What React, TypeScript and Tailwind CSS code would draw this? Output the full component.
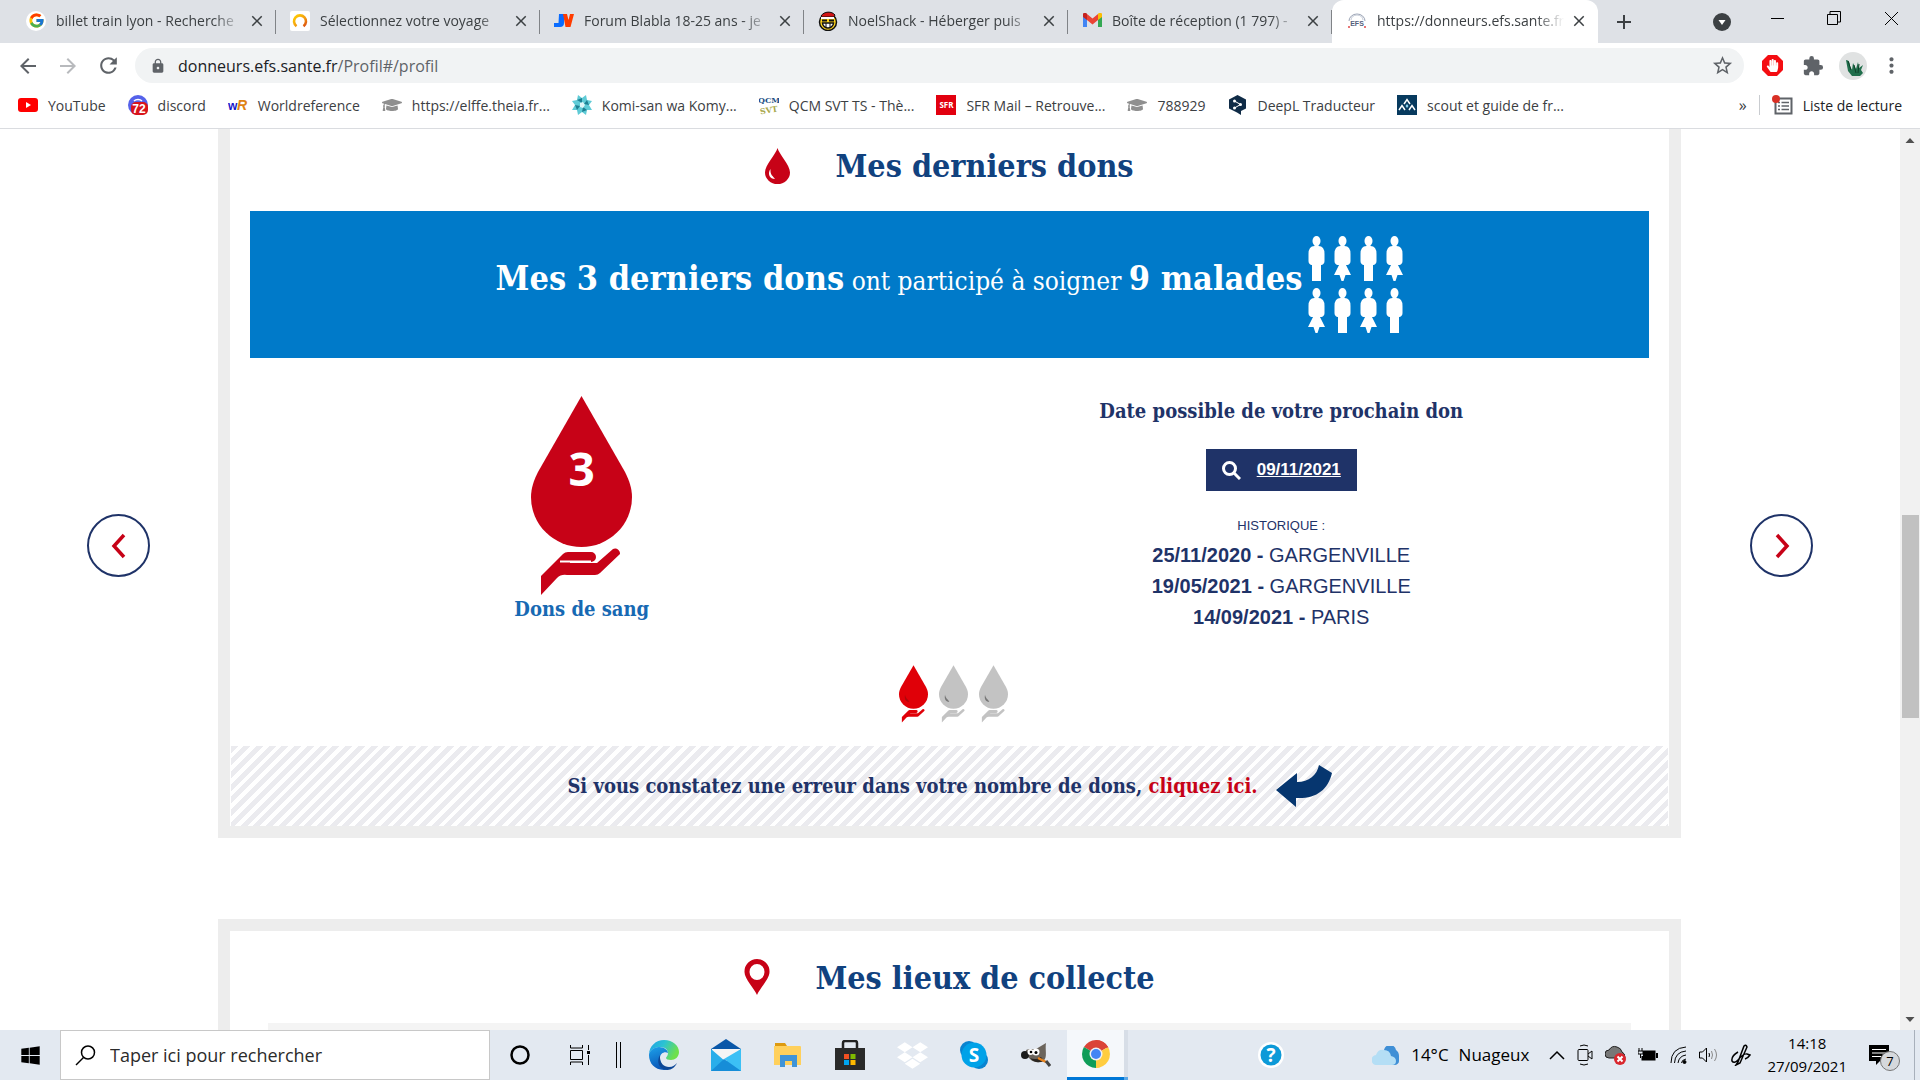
import { FC, ReactNode } from "react";
import { FcGoogle } from "react-icons/fc";
import { FaDropbox, FaGraduationCap, FaHandPaper, FaWindows } from "react-icons/fa";
import { MdArrowBack, MdArrowForward, MdClose, MdExtension, MdLock, MdMoreVert, MdRefresh, MdStarBorder } from "react-icons/md";

interface ITab {
    title: string
    icon: ReactNode
    active?: boolean
}

interface IBookmark {
    label: string
    icon: ReactNode
}

/* ---------- favicons ---------- */

const GoogleIcon: FC = () => (
    <span className="w-5 h-5 rounded-full bg-white flex items-center justify-center"><FcGoogle size={17} /></span>
);

const TravelIcon: FC = () => (
    <span className="w-5 h-5 bg-white rounded-xs flex items-center justify-center">
        <svg width="16" height="16" viewBox="0 0 16 16" fill="none">
            <defs>
                <linearGradient id="travel" x1="0" y1="0" x2="1" y2="1">
                    <stop offset="0" stopColor="#ffd000" />
                    <stop offset="0.6" stopColor="#f39a12" />
                    <stop offset="1" stopColor="#d9480f" />
                </linearGradient>
            </defs>
            <path d="M4.5 13.2A6 6 0 1 1 11.5 13.2" stroke="url(#travel)" strokeWidth="2.6" />
        </svg>
    </span>
);

const JvIcon: FC = () => (
    <svg width="20" height="20" viewBox="0 0 20 20">
        <path d="M5 3h5v9a4 4 0 0 1-4 4H0v-4h4.500z" fill="#0a6cff" />
        <path d="M9 3h4l1.500 6L16 3h4l-3.500 13h-5z" fill="#ff3c00" />
    </svg>
);

const NoelIcon: FC = () => (
    <svg width="20" height="20" viewBox="0 0 20 20">
        <circle cx="10" cy="11" r="8.500" fill="#ffd51c" stroke="#111" strokeWidth="1.500" />
        <path d="M3 5c3-5 11-5 14-1l-1 2H4z" fill="#d11515" stroke="#111" />
        <path d="M3 6h13v2H3z" fill="#fff" />
        <path d="M4 8.500h5v2H4zM11 8.500h5v2h-5z" fill="#111" />
        <path d="M4.500 12h11c0 3-3 5-5.500 5s-5.500-2-5.500-5z" fill="#fff" stroke="#111" strokeWidth="1.500" />
        <path d="M8 12v4M12 12v4" stroke="#111" />
    </svg>
);

const GmailIcon: FC = () => (
    <svg width="19" height="15" viewBox="0 0 19 15">
        <path d="M0 3v11h4V6z" fill="#4285f4" />
        <path d="M19 3v11h-4V6z" fill="#34a853" />
        <path d="M4 1l5.500 4.500L15 1v6l-5.500 4.500L4 7z" fill="#ea4335" />
        <path d="M0 3a2 2 0 0 1 4-2v6L0 4z" fill="#c5221f" />
        <path d="M19 3a2 2 0 0 0-4-2v6l4-3z" fill="#fbbc04" />
    </svg>
);

const EfsIcon: FC = () => (
    <svg width="20" height="20" viewBox="0 0 20 20">
        <path d="M2 10a8 7 0 0 1 16 0" fill="none" stroke="#9aa3b5" />
        <path d="M4 9a6 5 0 0 1 12 0" fill="none" stroke="#c4cad6" />
        <text x="10" y="15" textAnchor="middle" fontFamily="Liberation Sans" fontSize="7" fontWeight="700" fill="#55617c">EFS</text>
        <circle cx="2" cy="16" r="1" fill="#e04848" />
        <circle cx="18" cy="16" r="1" fill="#e04848" />
    </svg>
);

const YoutubeIcon: FC = () => (
    <svg width="20" height="14" viewBox="0 0 20 14">
        <rect width="20" height="14" rx="3" fill="#f00" />
        <path d="M8 4l5 3-5 3z" fill="#fff" />
    </svg>
);

const DiscordIcon: FC = () => (
    <svg width="20" height="20" viewBox="0 0 20 20">
        <circle cx="10" cy="10" r="10" fill="#5562ea" />
        <path d="M6 6c2-2 6-2 8 0" stroke="#fff" strokeWidth="1.500" fill="none" />
        <rect x="3" y="7" width="17" height="13" rx="5" fill="#d8141c" />
        <text x="11" y="18" textAnchor="middle" fontFamily="Liberation Sans" fontSize="12" fontWeight="700" fill="#fff">72</text>
    </svg>
);

const WordrefIcon: FC = () => (
    <svg width="20" height="20" viewBox="0 0 20 20">
        <text x="0" y="15" fontFamily="Liberation Sans" fontSize="12" fontWeight="700" fill="#1414c8">w</text>
        <text x="9" y="15" fontFamily="Liberation Sans" fontSize="14" fontStyle="italic" fontWeight="700" fill="#e08214">R</text>
    </svg>
);

const KomiIcon: FC = () => (
    <svg width="20" height="20" viewBox="0 0 20 20">
        <path d="M6 0l4 3 4-3 1 5 5 1-3 4 3 5-5 0-1 5-4-3-4 3-1-5-5 0 3-5-3-4 5-1z" fill="#5fcbd6" />
        <path d="M5 5l5-2 0 5zM15 5l2 5-5-1zM15 15l-5 2 1-5zM5 15l-2-5 5 1z" fill="#1d7f92" />
        <path d="M8 8l3-1 2 3-2 3-3-1z" fill="#dff6f8" />
    </svg>
);

const QcmIcon: FC = () => (
    <svg width="20" height="20" viewBox="0 0 20 20">
        <text x="10" y="8" textAnchor="middle" fontFamily="DejaVu Serif" fontSize="8" fontWeight="700" fill="#1d4f85">QCM</text>
        <text x="10" y="18" textAnchor="middle" fontFamily="DejaVu Serif" fontSize="8" fontWeight="700" fill="#a8a84a" transform="rotate(-10 10 16)">SVT</text>
    </svg>
);

const SfrIcon: FC = () => (
    <span className="w-5 h-5 bg-[#e2000f] text-white text-[8px] font-bold flex items-center justify-center">SFR</span>
);

const DeeplIcon: FC = () => (
    <svg width="17" height="20" viewBox="0 0 17 20">
        <path d="M8.500 0L17 4.500v9L12 16v4l-4-2.500L0 13.500v-9z" fill="#0f2b46" />
        <path d="M5.500 6l6 3.500-6 3.500" stroke="#fff" fill="none" />
        <circle cx="5.500" cy="6" r="1.500" fill="#fff" />
        <circle cx="11.500" cy="9.500" r="1.500" fill="#fff" />
        <circle cx="5.500" cy="13" r="1.500" fill="#fff" />
    </svg>
);

const ScoutIcon: FC = () => (
    <svg width="20" height="20" viewBox="0 0 20 20">
        <rect width="20" height="20" fill="#073a5e" />
        <path d="M7 9l3-4.500L13 9M2 15l3-4.500L8 15M12 15l3-4.500L18 15" stroke="#fff" strokeWidth="1.500" fill="none" />
        <path d="M10 9l1.500 2L10 13l-1.500-2z" fill="#8fd3ee" />
    </svg>
);

const tabs: ITab[] = [
    { title: "billet train lyon - Recherche", icon: <GoogleIcon /> },
    { title: "Sélectionnez votre voyage", icon: <TravelIcon /> },
    { title: "Forum Blabla 18-25 ans - je", icon: <JvIcon /> },
    { title: "NoelShack - Héberger puis", icon: <NoelIcon /> },
    { title: "Boîte de réception (1 797) -", icon: <GmailIcon /> },
    { title: "https://donneurs.efs.sante.fr", icon: <EfsIcon />, active: true },
]

const bookmarks: IBookmark[] = [
    { label: "YouTube", icon: <YoutubeIcon /> },
    { label: "discord", icon: <DiscordIcon /> },
    { label: "Worldreference", icon: <WordrefIcon /> },
    { label: "https://elffe.theia.fr...", icon: <FaGraduationCap size={20} color="#8f8f8f" /> },
    { label: "Komi-san wa Komy...", icon: <KomiIcon /> },
    { label: "QCM SVT TS - Thè...", icon: <QcmIcon /> },
    { label: "SFR Mail – Retrouve...", icon: <SfrIcon /> },
    { label: "788929", icon: <FaGraduationCap size={20} color="#8f8f8f" /> },
    { label: "DeepL Traducteur", icon: <DeeplIcon /> },
    { label: "scout et guide de fr...", icon: <ScoutIcon /> },
]

/* ---------- browser chrome ---------- */

const TabStrip: FC = () => (
    <div className="h-[43px] bg-[#dee1e6] flex items-stretch pl-3">
        {tabs.map((tab) => (
            <div key={tab.title} className={tab.active ? "w-[266px] flex items-center pl-[15px] pr-2.5 pb-0.5 bg-white rounded-t-xl" : "w-[264px] flex items-center pl-[14px] pr-2.5 pb-0.5 relative"}>
                <span className="w-5 flex justify-center shrink-0">{tab.icon}</span>
                <span className="ml-2.5 flex-1 overflow-hidden whitespace-nowrap text-[14px] text-[#3c4043] [mask-image:linear-gradient(to_right,#000_85%,transparent)]">{tab.title}</span>
                <button aria-label="Fermer l'onglet" className="ml-1.5 text-[#3c4043]"><MdClose size={18} /></button>
                {!tab.active && <span className="absolute right-0 top-2.5 h-6 w-px bg-[#808387]" />}
            </div>
        ))}
        <button aria-label="Nouvel onglet" className="ml-4 text-[#3c4043]">
            <svg width="20" height="20" viewBox="0 0 20 20"><path d="M10 3v14M3 10h14" stroke="currentColor" strokeWidth="2" /></svg>
        </button>
        <div className="ml-auto flex items-center">
            <button aria-label="Rechercher un onglet" className="mr-[18px]">
                <svg width="18" height="18" viewBox="0 0 18 18"><circle cx="9" cy="9" r="9" fill="#3c4043" /><path d="M5.500 7h7L9 12z" fill="#fff" /></svg>
            </button>
            <div className="flex items-start h-full">
                <button aria-label="Réduire" className="w-[56px] h-9 flex items-center justify-center">
                    <svg width="13" height="13" viewBox="0 0 13 13"><path d="M0 6.500h13" stroke="#000" /></svg>
                </button>
                <button aria-label="Restaurer" className="w-[58px] h-9 flex items-center justify-center">
                    <svg width="14" height="14" viewBox="0 0 14 14" fill="none" stroke="#000"><path d="M.5 3.500h10v10H.5zM3 3.500V.5h10.500V11h-3" /></svg>
                </button>
                <button aria-label="Fermer" className="w-[57px] h-9 flex items-center justify-center">
                    <svg width="13" height="13" viewBox="0 0 13 13" stroke="#000"><path d="M0 0l13 13M13 0L0 13" /></svg>
                </button>
            </div>
        </div>
    </div>
);

const Toolbar: FC = () => (
    <div className="h-[45px] flex items-center bg-white text-[#5f6368]">
        <button aria-label="Précédent" className="ml-4"><MdArrowBack size={24} /></button>
        <button aria-label="Suivant" className="ml-4 text-[#b8babd]"><MdArrowForward size={24} /></button>
        <button aria-label="Actualiser" className="ml-4"><MdRefresh size={25} /></button>
        <div className="ml-3.5 flex-1 h-[35px] rounded-full bg-[#f1f3f4] flex items-center pl-[15px] pr-2.5">
            <MdLock size={16} />
            <div className="ml-3 flex-1 text-[16px] whitespace-nowrap">
                <span className="text-[#202124]">donneurs.efs.sante.fr</span>/Profil#/profil
            </div>
            <button aria-label="Ajouter aux favoris"><MdStarBorder size={23} /></button>
        </div>
        <button aria-label="AdBlock" className="ml-[18px]">
            <svg width="21" height="21" viewBox="0 0 21 21"><path d="M6 0h9l6 6v9l-6 6H6l-6-6V6z" fill="#f40d12" /><FaHandPaper x="4" y="4" size={13} color="#fff" /></svg>
        </button>
        <button aria-label="Extensions" className="ml-[19px]"><MdExtension size={22} /></button>
        <button aria-label="Profil" className="ml-[15px]">
            <svg width="28" height="28" viewBox="0 0 28 28">
                <circle cx="14" cy="14" r="14" fill="#e0e2e2" />
                <path d="M7 8c3 0 4 3 4 6l2 4 1-7 3 6 2-7 1 6 4-3-2 5 2 3-3 3h-8l-4-5z" fill="#1f6e4b" />
                <path d="M9 9l3 9M15 13l2 8M20 12l-1 9" stroke="#0e4029" fill="none" />
            </svg>
        </button>
        <button aria-label="Menu" className="ml-3 mr-4"><MdMoreVert size={25} /></button>
    </div>
);

const Bookmarks: FC = () => (
    <nav className="h-[41px] flex items-center pl-[18px] pr-[18px] pb-1.5 bg-white text-[14px] text-[#3c4043] border-b border-[#dadce0] whitespace-nowrap">
        <div className="flex gap-[22px]">
            {bookmarks.map((item) => (
                <a key={item.label} href="#" className="flex items-center gap-2.5">
                    <span className="w-5 flex justify-center">{item.icon}</span>
                    {item.label}
                </a>
            ))}
        </div>
        <button aria-label="Autres favoris" className="ml-auto text-[16px]">»</button>
        <span className="ml-3 w-px h-5 bg-[#c9ccd0]" />
        <button className="ml-3 flex items-center gap-2.5 text-[#202124]">
            <svg width="21" height="21" viewBox="0 0 21 21">
                <path d="M3.500 3.500h16v15h-16z" fill="none" stroke="#5f6368" strokeWidth="2" />
                <path d="M6 7.500h2M6 11h2M6 14.500h2M9.500 7.500H17M9.500 11H17M9.500 14.500H17" stroke="#5f6368" strokeWidth="1.500" />
                <circle cx="4" cy="4" r="4" fill="#d93025" />
            </svg>
            Liste de lecture
        </button>
    </nav>
);

/* ---------- page ---------- */

const HandShape: FC = () => (
    <path d="M10 199V180L32 158Q34 156 37 156H60A5 5 0 0 1 60 166H39V167H66L82 153A5 5 0 0 1 89 158L69 177Q67 179 64 179H36Q30 178 26 182Z" />
);

const BigDrop: FC = () => (
    <svg width="101" height="200" viewBox="0 0 101 200" fill="#c70217">
        <path d="M50.500 0L94 76C98 84 101 92 101 101A50.500 50 0 0 1 0 101C0 92 3 84 7 76Z" />
        <HandShape />
        <path d="M29 165.500H60" stroke="#fff" strokeWidth="2" />
    </svg>
);

const SmallDrop: FC<{ on?: boolean }> = ({ on }) => (
    <svg width="29" height="58" viewBox="0 0 101 200" fill={on ? "#e00008" : "#c3c3c3"}>
        <path d="M50.500 0L94 76C98 84 101 92 101 101A50.500 50 0 0 1 0 101C0 92 3 84 7 76Z" />
        <path d="M21 103C17 120 26 128 36 128C32 118 24 118 21 103Z" fill={on ? "#b0050a" : "#777"} />
        <HandShape />
    </svg>
);

const TitleDrop: FC = () => (
    <svg width="25" height="36" viewBox="0 0 25 36">
        <path d="M12.500 0C14 6 25 17 25 24.500A12.500 11.500 0 0 1 0 24.500C0 17 11 6 12.500 0Z" fill="#c70217" />
        <path d="M5.500 21C2 26 5 31 10 31C8 28 5 27 5.500 21Z" fill="#fff" />
    </svg>
);

const TitlePin: FC = () => (
    <svg width="26" height="36" viewBox="0 0 26 36">
        <path d="M13 0A12.500 12.500 0 0 0 .5 13C.5 20 10 29 13 36C16 29 25.500 20 25.500 13A12.500 12.500 0 0 0 13 0ZM13 5A7.500 8 0 1 1 13 21A7.500 8 0 0 1 13 5Z" fill="#c70217" fillRule="evenodd" />
    </svg>
);

const Person: FC<{ woman?: boolean }> = ({ woman }) => (
    <svg width="17" height="45" viewBox="0 0 17 45" fill="#fff">
        <ellipse cx="8.500" cy="5" rx="4" ry="5" />
        <path d="M6.500 8h4v2q6 0 6 8v7q0 3-3 4h-10q-3-1-3-4v-7q0-8 6-8z" />
        {woman ? <path d="M6 27h5l6 12h-5.500L9.500 45h-2L5.500 39H0z" /> : <path d="M4 27h9v18H4z" />}
    </svg>
);

const crowd = [false, true, false, true, true, false, true, false]

const history = [
    { date: "25/11/2020", place: "GARGENVILLE" },
    { date: "19/05/2021", place: "GARGENVILLE" },
    { date: "14/09/2021", place: "PARIS" },
]

const CarouselButton: FC<{ label: string, d: string }> = ({ label, d }) => (
    <button aria-label={label} className="mt-[385px] w-[63px] h-[63px] shrink-0 rounded-full border-2 border-[#1f3368] flex items-center justify-center">
        <svg width="18" height="26" viewBox="0 0 18 26" fill="none" stroke="#c70217" strokeWidth="3.500"><path d={d} /></svg>
    </button>
);

const slab = "font-['DejaVu_Serif_Condensed','DejaVu_Serif',serif]"

const LastDonations: FC = () => (
    <section className="flex-1 border-12 border-t-0 border-[#ededed]">
        <div className="px-5 pt-[18px]">
            <div className="h-[38px] flex items-center justify-center gap-[45px]">
                <TitleDrop />
                <h2 className={`${slab} text-[32px] font-bold text-[#11427f] leading-[38px]`}>Mes derniers dons</h2>
            </div>
            <div className={`${slab} mt-[26px] h-[147px] bg-[#007ac9] text-white flex items-center justify-center gap-1.5`}>
                <p className="pb-3 whitespace-nowrap text-[26px]">
                    <b className="text-[34px]">Mes 3 derniers dons</b> ont participé à soigner <b className="text-[34px]">9 malades</b>
                </p>
                <div className="grid grid-cols-4 gap-x-[9px] gap-y-[7px]">
                    {crowd.map((woman, i) => <Person key={i} woman={woman} />)}
                </div>
            </div>
            <div className="grid grid-cols-2 mt-[38px] text-[#1f3368]">
                <div className="flex justify-center pr-9">
                    <div className="flex flex-col items-center">
                        <div className="relative">
                            <BigDrop />
                            <span className="absolute inset-x-0 top-[42px] text-center text-[46px] leading-[60px] font-bold text-white font-['Noto_Sans',sans-serif]">3</span>
                        </div>
                        <p className={`${slab} text-[20px] leading-[26px] font-bold text-[#1769b3]`}>Dons de sang</p>
                    </div>
                </div>
                <div className="flex flex-col items-center pr-9 font-['Liberation_Sans',Arial,sans-serif]">
                    <p className={`${slab} text-[20px] leading-[30px] font-bold whitespace-nowrap`}>Date possible de votre prochain don</p>
                    <a href="#" className="mt-[23px] h-[42px] px-4 bg-[#1f3368] text-white flex items-center gap-4 text-[17px] font-bold">
                        <svg width="19" height="19" viewBox="0 0 19 19" fill="none" stroke="#fff" strokeWidth="3"><circle cx="7.500" cy="7.500" r="6" /><path d="M12 12l6 6" /></svg>
                        <span className="underline">09/11/2021</span>
                    </a>
                    <p className="mt-[25px] text-[13px] leading-5">HISTORIQUE :</p>
                    <ul className="mt-1 text-[20px] leading-[31px] text-center">
                        {history.map((h) => <li key={h.date}><b>{h.date} -</b> {h.place}</li>)}
                    </ul>
                </div>
            </div>
            <div className="mt-[32px] flex justify-center gap-[11px] pl-2">
                <SmallDrop on />
                <SmallDrop />
                <SmallDrop />
            </div>
        </div>
        <div className="mt-[23px] h-20 mx-px flex items-center justify-center gap-[18px] bg-[repeating-linear-gradient(135deg,#ebebef_0px,#ebebef_5px,#fff_5px,#fff_9px)]">
            <p className={`${slab} text-[20px] font-bold text-[#1f3368]`}>Si vous constatez une erreur dans votre nombre de dons, <a href="#" className="text-[#c70217]">cliquez ici.</a></p>
            <svg width="56" height="42" viewBox="0 0 56 42"><path d="M43 0L56 8C52 25 40 34 20 33V42L0 25L21 8V17C33 17 41 10 43 0Z" fill="#06366f" /></svg>
        </div>
    </section>
);

const CollectPlaces: FC = () => (
    <section className="mt-[81px] ml-[218px] mr-[219px] border-12 border-b-0 border-[#ededed] flex-1">
        <div className="pt-7 flex items-start justify-center gap-[45px]">
            <TitlePin />
            <h2 className={`${slab} text-[32px] font-bold text-[#11427f] leading-[38px]`}>Mes lieux de collecte</h2>
        </div>
        <div className="mt-[26px] mx-[38px] h-20 bg-[#f4f4f4]" />
    </section>
);

const ScrollBar: FC = () => (
    <div className="w-5 bg-[#f1f1f1] flex flex-col items-center">
        <svg width="20" height="20" viewBox="0 0 20 20"><path d="M5.500 14L10 9l4.500 5z" fill="#505050" /></svg>
        <div className="mt-[366px] w-[17px] h-[203px] bg-[#c1c1c1]" />
        <svg className="mt-auto" width="20" height="20" viewBox="0 0 20 20"><path d="M5.500 7L10 12l4.500-5z" fill="#505050" /></svg>
    </div>
);

/* ---------- taskbar ---------- */

const EdgeIcon: FC = () => (
    <svg width="30" height="30" viewBox="0 0 30 30">
        <defs>
            <linearGradient id="edge-a" x1="0" y1="0" x2="1" y2="0.400">
                <stop offset="0" stopColor="#1e9fe8" /><stop offset="0.500" stopColor="#2cc3d2" /><stop offset="1" stopColor="#6fe04b" />
            </linearGradient>
            <linearGradient id="edge-b" x1="0" y1="0" x2="0.300" y2="1">
                <stop offset="0" stopColor="#1da2ea" /><stop offset="1" stopColor="#0a57b8" />
            </linearGradient>
        </defs>
        <path d="M0 15C0 6 7 0 15 0c9 0 15 6 15 12 0 5-4 8-8 8-3 0-5-1-5-2 0-1 2-2 2-5 0-4-4-6-8-6C5 7 0 11 0 15z" fill="url(#edge-a)" />
        <path d="M0 15c0-4 5-8 10-8 5 0 9 3 9 6-3-2-8 0-8 5 0 6 5 10 9 11.500C8 32 0 25 0 15z" fill="url(#edge-b)" />
        <path d="M11 18c0 5 4 9 9 9 4 0 6-2 8-4-2 4-5 7-10 7C10 29 7 22 11 15z" fill="#0d4796" />
    </svg>
);

const MailIcon: FC = () => (
    <svg width="30" height="32" viewBox="0 0 30 32">
        <path d="M15 0l15 10v3H0v-3z" fill="#0a57a8" />
        <path d="M1 10h28v10H1z" fill="#f5f5f5" />
        <path d="M0 10l15 13 15-13v22H0z" fill="#29aeea" />
        <path d="M13 20l17 12V10z" fill="#3cc0f5" />
        <path d="M0 32l13-12 17 12z" fill="#168dd8" />
    </svg>
);

const FolderIcon: FC = () => (
    <svg width="28" height="24" viewBox="0 0 28 24">
        <path d="M1 0h10l2 3H1z" fill="#dd9a10" />
        <path d="M0 3h26a1 1 0 0 1 1 1v18H0z" fill="#ffd05c" />
        <path d="M6 12h17v12h-5v-6h-7v6H6z" fill="#3f94d8" />
    </svg>
);

const StoreIcon: FC = () => (
    <svg width="30" height="30" viewBox="0 0 30 30">
        <path d="M8 9V3q0-2 2-2h10q2 0 2 2v6" fill="none" stroke="#222" strokeWidth="2.500" />
        <path d="M0 8h30v22H0z" fill="#2a2a2a" />
        <path d="M9 14h5v5H9z" fill="#f25022" /><path d="M15.500 14h5v5h-5z" fill="#7fba00" />
        <path d="M9 20h5v5H9z" fill="#00a4ef" /><path d="M15.500 20h5v5h-5z" fill="#ffb900" />
    </svg>
);

const SkypeIcon: FC = () => (
    <svg width="28" height="28" viewBox="0 0 28 28">
        <circle cx="9" cy="9" r="9" fill="#0a84d0" /><circle cx="19" cy="19" r="9" fill="#0a84d0" />
        <circle cx="14" cy="14" r="12.500" fill="#00a2e8" />
        <text x="14" y="21" textAnchor="middle" fontFamily="Open Sans" fontWeight="700" fontSize="19" fill="#fff">S</text>
    </svg>
);

const GimpIcon: FC = () => (
    <svg width="30" height="24" viewBox="0 0 30 24">
        <path d="M5 7l3-1 7 0L25 0c-1 6 1 12-1 16-3 4-10 4-14 1L6 13z" fill="#6b645c" />
        <circle cx="4" cy="12" r="4" fill="#1c1c1c" />
        <circle cx="9.500" cy="9" r="3" fill="#fff" /><circle cx="15" cy="9" r="3.500" fill="#fff" />
        <circle cx="10" cy="9" r="1.300" /><circle cx="15" cy="9.500" r="1.500" />
        <path d="M9 15c4 2 8 1 11-1l3 4c-5 2-10 2-14-3z" fill="#2a2622" />
        <path d="M17 15l8 4" stroke="#e8831c" strokeWidth="2.500" /><path d="M25 18l4 5" stroke="#444" strokeWidth="3" />
    </svg>
);

const ChromeIcon: FC = () => (
    <svg width="28" height="28" viewBox="0 0 28 28">
        <path d="M14 14L1.900 7A14 14 0 0 1 26.100 7z" fill="#db4437" />
        <path d="M14 14L26.100 7A14 14 0 0 1 14 28z" fill="#ffcd40" />
        <path d="M14 14V28A14 14 0 0 1 1.900 7z" fill="#0f9d58" />
        <path d="M14 7.500h12.400A14 14 0 0 0 14 0z" fill="#db4437" />
        <path d="M19.500 17.500L14 28A14 14 0 0 0 18 27z" fill="#ffcd40" />
        <circle cx="14" cy="14" r="6.500" fill="#f1f1f1" /><circle cx="14" cy="14" r="5" fill="#4285f4" />
    </svg>
);

const CortanaIcon: FC = () => (
    <svg width="20" height="20" viewBox="0 0 20 20"><circle cx="10" cy="10" r="8.500" fill="none" stroke="#000" strokeWidth="2.500" /></svg>
);

const TaskViewIcon: FC = () => (
    <svg width="20" height="20" viewBox="0 0 20 20" fill="none" stroke="#000">
        <path d="M.5 5.500h12v9H.5zM.5 0v3h12V0M.5 20v-3h12v3M18.500 0v5M18.500 10v10" /><path d="M17 6h3v3h-3z" fill="#000" stroke="none" />
    </svg>
);

const apps = [
    { name: "Microsoft Edge", icon: <EdgeIcon /> },
    { name: "Courrier", icon: <MailIcon /> },
    { name: "Explorateur de fichiers", icon: <FolderIcon /> },
    { name: "Microsoft Store", icon: <StoreIcon /> },
    { name: "Dropbox", icon: <FaDropbox size={31} color="#fff" /> },
    { name: "Skype", icon: <SkypeIcon /> },
    { name: "GIMP", icon: <GimpIcon /> },
]

const Tray: FC = () => (
    <div className="ml-auto flex items-center shrink-0">
        <button aria-label="Aide" className="mr-[88px]">
            <svg width="26" height="26" viewBox="0 0 26 26">
                <circle cx="13" cy="13" r="13" fill="#fff" /><circle cx="13" cy="13" r="10.500" fill="#0d9ad8" />
                <text x="13" y="20" textAnchor="middle" fontFamily="Open Sans" fontWeight="700" fontSize="19" fill="#fff">?</text>
            </svg>
        </button>
        <button className="flex items-center gap-3 text-[17px] whitespace-nowrap">
            <svg width="27" height="19" viewBox="0 0 27 19">
                <path d="M12 6a6 6 0 0 1 12-2q3 2 3 6v5q0 3-4 4h-8z" fill="#3f8fd6" />
                <path d="M5 19a5 5 0 0 1-1-10Q6 3 12 4q6 0 7 6 5 1 5 5 0 4-4 4z" fill="#b4def5" />
            </svg>
            <span className="flex gap-2.5"><span>14°C</span><span>Nuageux</span></span>
        </button>
        <div className="ml-5 flex items-center gap-3">
            <svg width="16" height="10" viewBox="0 0 16 10" fill="none" stroke="#000" strokeWidth="1.500"><path d="M1 9l7-7 7 7" /></svg>
            <svg width="16" height="22" viewBox="0 0 16 22" fill="none" stroke="#000"><path d="M3 2q4-2 8 0M3 20q4 2 8 0M2 5.500h8q1 0 1 1v9q0 1-1 1H2q-1 0-1-1v-9q0-1 1-1zM11 10l4-3v8l-4-3" /></svg>
            <svg width="21" height="22" viewBox="0 0 21 22">
                <path d="M4 14a4 4 0 0 1 0-8Q7 1 12 3q4 1 5 5 3 1 3 6z" fill="#777" stroke="#222" />
                <circle cx="15" cy="15" r="6" fill="#d9272e" /><path d="M12.500 12.500l5 5M17.500 12.500l-5 5" stroke="#fff" strokeWidth="2" />
            </svg>
            <svg width="20" height="14" viewBox="0 0 20 14"><path d="M1 0v3M4 0v3M0 3h5v3H0zM2.500 6v4" stroke="#000" fill="none" /><path d="M5 2.500h12.500v10H3.500V8H5z" /><path d="M18 5h2v5h-2z" /></svg>
            <svg width="17" height="18" viewBox="0 0 17 18" fill="none" stroke="#000"><path d="M1 17Q1 2 16 1M4.500 17Q5 6 16 5M8 17q1-7 8-8M11.500 17q0-3 4.500-4" /><circle cx="14.500" cy="16" r="1.500" fill="#000" /></svg>
            <svg width="20" height="18" viewBox="0 0 20 18" fill="none" stroke="#000"><path d="M.5 6h3l4-4v14l-4-4h-3z" /><path d="M10 7q1 2 0 4" /><path d="M12.500 5q2 4 0 8M15.500 3q4 6 0 12" stroke="#888" /></svg>
            <svg width="20" height="22" viewBox="0 0 20 22" fill="none" stroke="#000" strokeWidth="1.500"><path d="M7 18L13 2q2-2 3 1L9 19l-4 2zM7 8q-7 4-6 9 2 3 6-1 6-7 9-6t3 1q-2 3-5 4" /></svg>
        </div>
        <div className="ml-4 text-center text-[15px] leading-[23px]">
            <div>14:18</div>
            <div>27/09/2021</div>
        </div>
        <button aria-label="7 notifications" className="ml-[22px] relative w-[31px] h-[31px]">
            <svg width="20" height="20" viewBox="0 0 20 20"><path d="M0 0h20v16h-9l-4 4v-4H0z" /><path d="M3 4.500h14M3 8h14M3 11.500h9" stroke="#fff" /></svg>
            <span className="absolute right-0 bottom-0 w-5 h-5 rounded-full border border-[#777] bg-[#d5d8dc] text-[13px] leading-[18px] text-center">7</span>
        </button>
        <span className="ml-[14px] mr-[5px] w-px h-[50px] bg-[#a8b0bb]" />
    </div>
);

const TaskBar: FC = () => (
    <footer className="h-[50px] shrink-0 bg-[#e3e9f1] text-black flex items-center">
        <button aria-label="Démarrer" className="w-[60px] flex justify-center"><FaWindows size={21} /></button>
        <label className="w-[430px] h-[50px] bg-white border border-[#c8c8c8] flex items-center pl-3.5 gap-3.5">
            <svg width="21" height="21" viewBox="0 0 21 21" fill="none" stroke="#000" strokeWidth="1.500"><circle cx="13" cy="7.500" r="6.500" /><path d="M8.500 12.500L1 20" /></svg>
            <input aria-label="Rechercher" placeholder="Taper ici pour rechercher" className="flex-1 text-[18px] outline-none placeholder:text-[#2b2b2b]" />
        </label>
        <button aria-label="Cortana" className="w-[60px] flex justify-center"><CortanaIcon /></button>
        <button aria-label="Affichage des tâches" className="w-[60px] flex justify-center"><TaskViewIcon /></button>
        <span className="mx-1.5 w-[5px] h-[26px] border-x border-black" />
        <div className="ml-1.5 flex items-center">
            {apps.map((app) => (
                <button key={app.name} aria-label={app.name} className="w-[62px] flex justify-center">{app.icon}</button>
            ))}
            <button aria-label="Google Chrome" className="w-[57px] h-[50px] bg-[#f5f8fb] border-b-3 border-[#0078d7] flex items-center justify-center"><ChromeIcon /></button>
            <span className="w-1 h-[50px] bg-[#d7dee7] border-b-3 border-[#5aa7e6]" />
        </div>
        <Tray />
    </footer>
);

const App: FC = () => {
    return (
        <div className="h-screen flex flex-col overflow-hidden bg-white font-['Open_Sans','Segoe_UI',sans-serif]">
            <header>
                <TabStrip />
                <Toolbar />
                <Bookmarks />
            </header>
            <div className="flex-1 min-h-0 flex">
                <main className="flex-1 flex flex-col overflow-hidden">
                    <div className="flex items-stretch">
                        <div className="w-[218px] pr-[68px] flex justify-end"><CarouselButton label="Précédent" d="M14 2L4 13l10 11" /></div>
                        <LastDonations />
                        <div className="w-[219px] pl-[69px] flex"><CarouselButton label="Suivant" d="M4 2l10 11L4 24" /></div>
                    </div>
                    <CollectPlaces />
                </main>
                <ScrollBar />
            </div>
            <TaskBar />
        </div>
    );
};

export default App;
